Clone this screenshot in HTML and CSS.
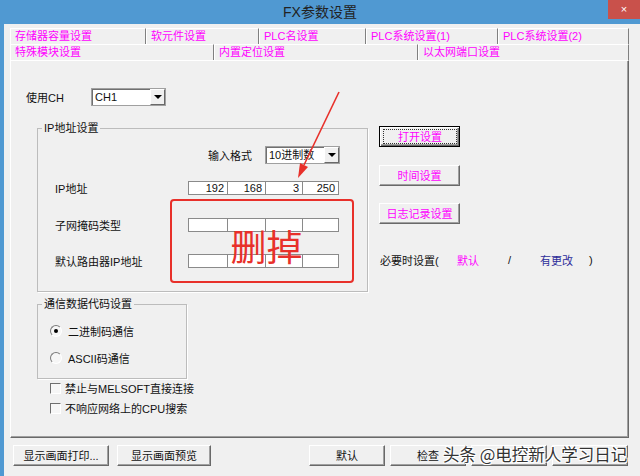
FILE: index.html
```html
<!DOCTYPE html>
<html lang="zh-CN">
<head>
<meta charset="utf-8">
<title>FX参数设置</title>
<link rel="stylesheet" href="styles.css">
</head>
<body>
<div class="window">
  <div class="titlebar">
    <span class="title">FX参数设置</span>
    <span class="close">×</span>
  </div>
  <div class="client">
    <div class="tabs">
      <div class="tabrow">
        <div class="tab w1">存储器容量设置</div>
        <div class="tab w2">软元件设置</div>
        <div class="tab w3">PLC名设置</div>
        <div class="tab w4">PLC系统设置(1)</div>
        <div class="tab w5">PLC系统设置(2)</div>
      </div>
      <div class="tabrow">
        <div class="tab w6">特殊模块设置</div>
        <div class="tab w7">内置定位设置</div>
        <div class="tab w8 active">以太网端口设置</div>
      </div>
    </div>
    <div class="panel">
      <div class="ch-row">
        <span class="ch-label">使用CH</span>
        <div class="combo"><span class="combo-text">CH1</span><span class="drop"></span></div>
      </div>
      <div class="main">
        <div class="left">
          <fieldset class="group ip-group">
            <legend>IP地址设置</legend>
            <div class="fmt-row">
              <span>输入格式</span>
              <div class="combo"><span class="combo-text">10进制数</span><span class="drop"></span></div>
            </div>
            <div class="ip-row r1">
              <span class="ip-label">IP地址</span>
              <div class="ipbox"><span>192</span><span>168</span><span>3</span><span>250</span></div>
            </div>
            <div class="ip-row r2">
              <span class="ip-label">子网掩码类型</span>
              <div class="ipbox"><span></span><span></span><span></span><span></span></div>
            </div>
            <div class="ip-row r3">
              <span class="ip-label">默认路由器IP地址</span>
              <div class="ipbox"><span></span><span></span><span></span><span></span></div>
            </div>
          </fieldset>
          <fieldset class="group code-group">
            <legend>通信数据代码设置</legend>
            <div class="radio-row first"><span class="radio on"></span><span>二进制码通信</span></div>
            <div class="radio-row"><span class="radio"></span><span>ASCII码通信</span></div>
          </fieldset>
          <div class="check-row first"><span class="check"></span><span>禁止与MELSOFT直接连接</span></div>
          <div class="check-row"><span class="check"></span><span>不响应网络上的CPU搜索</span></div>
        </div>
        <div class="right">
          <div class="btn pink default"><span class="focus">打开设置</span></div>
          <div class="btn pink gap">时间设置</div>
          <div class="btn pink gap">日志记录设置</div>
          <div class="need-row">
            <span class="need">必要时设置(</span>
            <span class="def">默认</span>
            <span class="slash">/</span>
            <span class="chg">有更改</span>
            <span>)</span>
          </div>
        </div>
      </div>
    </div>
    <div class="bottom">
      <div class="btn b1">显示画面打印...</div>
      <div class="btn b2">显示画面预览</div>
      <div class="btn b3">默认</div>
      <div class="btn b4">检查</div>
      <div class="btn b4"></div>
      <div class="btn b4"></div>
    </div>
  </div>
</div>

<svg class="arrow" width="60" height="100" viewBox="0 0 60 100" aria-hidden="true">
  <line x1="49" y1="4" x2="14" y2="77" stroke="#e8302a" stroke-width="1.6"/>
  <polygon points="8,90 18,79 10,75" fill="#e8302a"/>
</svg>
<div class="redbox"><span class="del">删掉</span></div>
<div class="watermark">头条 @电控新人学习日记</div>
</body>
</html>
```

FILE: styles.css
```css
html, body {
  margin: 0;
  padding: 0;
  width: 640px;
  height: 476px;
  overflow: hidden;
  background: #f0f0f0;
  font-family: "Liberation Sans", "Noto Sans CJK SC", sans-serif;
  font-size: 11px;
  color: #111;
}

.window {
  width: 640px;
  height: 476px;
  display: flex;
  flex-direction: column;
}

.titlebar {
  position: relative;
  flex: none;
  height: 24px;
  background: #5099d2;
  display: flex;
  align-items: center;
  justify-content: center;
}

.title {
  font-size: 14px;
  line-height: 16px;
  color: #222;
}

.close {
  position: absolute;
  right: 0;
  top: 0;
  width: 32px;
  height: 19px;
  background: #c9514b;
  color: #fff;
  font-size: 11px;
  line-height: 19px;
  text-align: center;
}

.client {
  flex: 1;
  border-left: 4px solid #5099d2;
  padding: 4px 0 0 6px;
  display: flex;
  flex-direction: column;
}

/* tabs */
.tabs { width: 619px; }
.tabrow { display: flex; height: 16px; }
.tab {
  box-sizing: border-box;
  height: 16px;
  border-top: 1px solid #fff;
  border-left: 1px solid #fff;
  border-right: 1px solid #808080;
  padding-left: 4px;
  color: #ff00ff;
  line-height: 15px;
  white-space: nowrap;
}
.w1 { width: 136px; }
.w2 { width: 113px; }
.w3 { width: 107px; }
.w4 { width: 132px; }
.w5 { width: 131px; }
.w6 { width: 204px; }
.w7 { width: 204px; }
.w8 { width: 211px; }

/* panel */
.panel {
  box-sizing: border-box;
  width: 619px;
  height: 378px;
  border: 1px solid;
  border-color: #fff #696969 #696969 #fff;
  box-shadow: inset -1px -1px 0 #a0a0a0;
  padding: 27px 0 0 15px;
}

.ch-row {
  display: flex;
  align-items: center;
  height: 18px;
}
.ch-label { width: 65px; }

.combo {
  box-sizing: border-box;
  width: 75px;
  height: 18px;
  background: #fff;
  border: 1px solid #a0a0a0;
  box-shadow: inset 1px 1px 0 #707070;
  display: flex;
  align-items: center;
}
.combo-text {
  padding-left: 3px;
  line-height: 14px;
  white-space: nowrap;
}
.drop {
  margin-left: auto;
  box-sizing: border-box;
  width: 15px;
  height: 16px;
  background: #f0f0f0;
  border: 1px solid;
  border-color: #fff #696969 #696969 #fff;
  display: flex;
  align-items: center;
  justify-content: center;
}
.drop::after {
  content: "";
  border-top: 4px solid #000;
  border-left: 4px solid transparent;
  border-right: 4px solid transparent;
}

.main {
  display: flex;
  margin: 15px 0 0 11px;
}
.left { width: 331px; }
.right {
  width: 81px;
  margin-left: 11px;
  padding-top: 5px;
}

/* group boxes */
.group {
  box-sizing: border-box;
  margin: 0;
  padding: 0;
  border: 1px solid #bcbcbc;
  box-shadow: 1px 1px 0 #fff;
  min-inline-size: 0;
}
.group legend {
  margin-left: 4px;
  padding: 0 2px;
  line-height: 14px;
  white-space: nowrap;
}
.ip-group {
  width: 331px;
  padding-bottom: 23px;
}
.fmt-row {
  display: flex;
  justify-content: flex-end;
  align-items: center;
  gap: 13px;
  height: 18px;
  margin-top: 11px;
  padding-right: 27px;
}
.ip-row {
  display: flex;
  align-items: center;
  height: 14px;
}
.r1 { margin-top: 17px; }
.r2 { margin-top: 23px; }
.r3 { margin-top: 22px; }
.ip-label {
  box-sizing: border-box;
  width: 150px;
  padding-left: 17px;
  white-space: nowrap;
}
.ipbox {
  box-sizing: border-box;
  width: 151px;
  height: 14px;
  border: 1px solid #8a8a8a;
  display: grid;
  grid-template-columns: 38px 38px 37px 1fr;
  background: #fff;
}
.ipbox span {
  border-left: 1px solid #8a8a8a;
  text-align: right;
  padding-right: 3px;
  line-height: 12px;
}
.ipbox span:first-child { border-left: none; }

.code-group {
  width: 150px;
  margin-top: 5px;
  padding-bottom: 12px;
}
.radio-row {
  display: flex;
  align-items: center;
  gap: 6px;
  height: 16px;
  padding-left: 12px;
  margin-top: 11px;
  white-space: nowrap;
}
.radio-row.first { margin-top: 12px; }
.radio {
  box-sizing: border-box;
  width: 12px;
  height: 12px;
  border-radius: 50%;
  border: 1px solid;
  border-color: #7a7a7a #fff #fff #7a7a7a;
  background: #f6f6f6;
  display: flex;
  align-items: center;
  justify-content: center;
}
.radio.on::after {
  content: "";
  width: 4px;
  height: 4px;
  border-radius: 50%;
  background: #000;
}

.check-row {
  display: flex;
  align-items: center;
  gap: 4px;
  height: 16px;
  padding-left: 13px;
  margin-top: 4px;
  white-space: nowrap;
}
.check-row.first { margin-top: 1px; }
.check {
  box-sizing: border-box;
  width: 11px;
  height: 11px;
  border: 1px solid;
  border-color: #6e6e6e #fff #fff #6e6e6e;
  background: #f6f6f6;
}

/* buttons */
.btn {
  box-sizing: border-box;
  height: 21px;
  background: #f0f0f0;
  border: 1px solid;
  border-color: #fff #696969 #696969 #fff;
  box-shadow: inset -1px -1px 0 #a0a0a0;
  display: flex;
  align-items: center;
  justify-content: center;
  line-height: 14px;
  white-space: nowrap;
  color: #111;
}
.right .btn { width: 81px; }
.btn.pink { color: #ff00ff; }
.btn.gap { margin-top: 18px; }
.btn.gap + .btn.gap { margin-top: 17px; }
.btn.default {
  border: 1px solid #000;
  box-shadow: inset 1px 1px 0 #fff, inset -1px -1px 0 #696969, inset -2px -2px 0 #a0a0a0;
  padding: 2px 2px 2px 3px;
  align-items: stretch;
}
.focus {
  flex: 1;
  border: 1px dotted #333;
  display: flex;
  align-items: center;
  justify-content: center;
}

.need-row {
  display: flex;
  align-items: center;
  height: 16px;
  margin-top: 28px;
  padding-left: 1px;
  white-space: nowrap;
}
.need { width: 77px; flex: none; }
.def { width: 51px; flex: none; color: #ff00ff; }
.slash { width: 32px; flex: none; }
.chg { width: 49px; flex: none; color: #2d2d9a; }

.bottom {
  display: flex;
  margin-top: 7px;
  padding-left: 3px;
}
.b1 { width: 96px; }
.b2 { width: 94px; margin-left: 8px; }
.b3 { width: 76px; margin-left: 98px; }
.b4 { width: 76px; margin-left: 5px; }

/* annotations over the screenshot */
.arrow {
  position: absolute;
  left: 290px;
  top: 88px;
}
.redbox {
  position: absolute;
  left: 170px;
  top: 199px;
  box-sizing: border-box;
  width: 184px;
  height: 84px;
  border: 2px solid #e8302a;
  border-radius: 4px;
  display: flex;
  align-items: center;
  justify-content: center;
  padding: 8px 0 0 9px;
}
.del {
  font-family: "Noto Sans CJK SC", sans-serif;
  font-size: 36px;
  line-height: 1;
  color: #e8302a;
}
.watermark {
  position: absolute;
  left: 443px;
  top: 444px;
  font-family: "Noto Sans CJK SC", sans-serif;
  font-size: 16.5px;
  line-height: 20px;
  color: #333;
  white-space: nowrap;
  text-shadow: 1px 1px 0 #fff, -1px -1px 0 #fff, 1px -1px 0 #fff, -1px 1px 0 #fff;
}
```
